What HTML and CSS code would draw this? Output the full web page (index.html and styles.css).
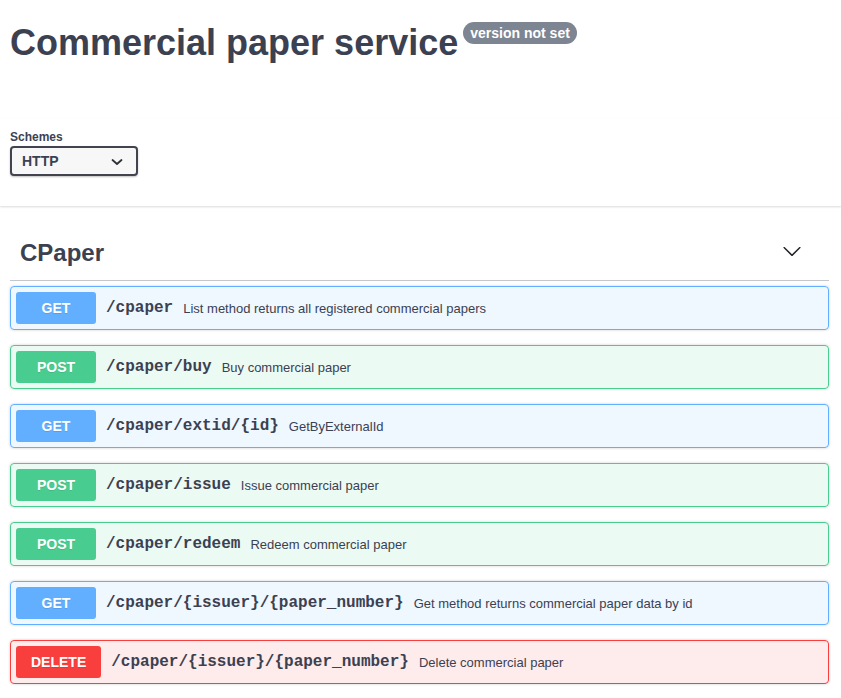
FILE: index.html
```html
<!DOCTYPE html>
<html lang="en">
<head>
<meta charset="utf-8">
<title>Commercial paper service</title>
<link rel="stylesheet" href="styles.css">
</head>
<body>
<div class="info">
  <div class="title-row">
    <h2 class="title">Commercial paper service</h2>
    <span class="version">version not set</span>
  </div>
</div>

<div class="scheme-container">
  <div class="schemes">
    <span class="schemes-label">Schemes</span>
    <div class="select">
      <span>HTTP</span>
      <svg class="select-arrow" width="12" height="8" viewBox="0 0 12 8"><path d="M1.5 2 L6 6 L10.5 2" fill="none" stroke="#2f3237" stroke-width="1.8" stroke-linecap="round" stroke-linejoin="round"/></svg>
    </div>
  </div>
</div>

<div class="tag-section">
  <div class="tag-header">
    <h3 class="tag-name">CPaper</h3>
    <svg class="tag-arrow" width="20" height="20" viewBox="0 0 20 20"><path d="M17.418 6.109c.272-.268.709-.268.979 0s.271.701 0 .969l-7.908 7.83c-.27.268-.707.268-.979 0l-7.908-7.83c-.27-.268-.27-.701 0-.969.271-.268.709-.268.979 0L10 13.25l7.418-7.141z" fill="#1f2125"/></svg>
  </div>

  <div class="ops">
    <div class="op op-get">
      <span class="method">GET</span>
      <span class="path">/cpaper</span>
      <span class="desc">List method returns all registered commercial papers</span>
    </div>
    <div class="op op-post">
      <span class="method">POST</span>
      <span class="path">/cpaper/buy</span>
      <span class="desc">Buy commercial paper</span>
    </div>
    <div class="op op-get">
      <span class="method">GET</span>
      <span class="path">/cpaper/extid/{id}</span>
      <span class="desc">GetByExternalId</span>
    </div>
    <div class="op op-post">
      <span class="method">POST</span>
      <span class="path">/cpaper/issue</span>
      <span class="desc">Issue commercial paper</span>
    </div>
    <div class="op op-post">
      <span class="method">POST</span>
      <span class="path">/cpaper/redeem</span>
      <span class="desc">Redeem commercial paper</span>
    </div>
    <div class="op op-get">
      <span class="method">GET</span>
      <span class="path">/cpaper/{issuer}/{paper_number}</span>
      <span class="desc">Get method returns commercial paper data by id</span>
    </div>
    <div class="op op-delete">
      <span class="method">DELETE</span>
      <span class="path">/cpaper/{issuer}/{paper_number}</span>
      <span class="desc">Delete commercial paper</span>
    </div>
  </div>
</div>
</body>
</html>
```

FILE: styles.css
```css
* { box-sizing: border-box; }

html, body {
  margin: 0;
  padding: 0;
  background: #fff;
  font-family: "Liberation Sans", Arial, sans-serif;
  color: #3b4151;
}

.info {
  height: 118px;
  padding: 22px 10px 0 10px;
}

.title-row {
  display: flex;
  align-items: flex-start;
}

.title {
  margin: 0;
  font-size: 36px;
  line-height: 42px;
  font-weight: bold;
  color: #3b4151;
}

.version {
  margin-left: 5px;
  height: 22px;
  line-height: 22px;
  padding: 0 7px;
  font-size: 14px;
  font-weight: bold;
  color: #fff;
  background: #7d8492;
  border-radius: 57px;
}

.scheme-container {
  background: #fff;
  box-shadow: 0 1px 2px 0 rgba(0, 0, 0, 0.15);
  padding: 12px 10px 30px 10px;
  margin-bottom: 20px;
}

.schemes {
  display: flex;
  flex-direction: column;
  align-items: flex-start;
}

.schemes-label {
  font-size: 12px;
  line-height: 14px;
  font-weight: bold;
  color: #3b4151;
}

.select {
  margin-top: 2px;
  width: 128px;
  height: 30px;
  border: 2px solid #41444e;
  border-radius: 4px;
  background: #f7f7f7;
  box-shadow: 0 1px 2px 0 rgba(0, 0, 0, 0.25);
  display: flex;
  align-items: center;
  justify-content: space-between;
  padding: 0 13px 0 10px;
  font-size: 14px;
  font-weight: bold;
  color: #3b4151;
}

.select-arrow {
  display: block;
  margin-top: 1px;
}

.tag-section {
  padding: 0 12px 0 10px;
}

.tag-header {
  display: flex;
  justify-content: space-between;
  align-items: flex-start;
  padding: 13px 27px 13px 10px;
  border-bottom: 1px solid rgba(59, 65, 81, 0.3);
}

.tag-name {
  margin: 0;
  font-size: 24px;
  line-height: 28px;
  font-weight: bold;
  color: #3b4151;
}

.tag-arrow {
  display: block;
  margin-top: 2px;
}

.ops {
  margin-top: 5px;
}

.op {
  display: flex;
  align-items: center;
  padding: 5px;
  margin-bottom: 15px;
  border: 1px solid;
  border-radius: 4px;
  box-shadow: 0 0 3px rgba(0, 0, 0, 0.19);
}

.method {
  min-width: 80px;
  padding: 6px 15px;
  font-size: 14px;
  line-height: 20px;
  font-weight: bold;
  text-align: center;
  color: #fff;
  border-radius: 3px;
  text-shadow: 0 1px 0 rgba(0, 0, 0, 0.1);
}

.path {
  padding: 0 10px;
  font-family: "Liberation Mono", "Courier New", monospace;
  font-size: 16px;
  font-weight: bold;
  color: #3b4151;
}

.desc {
  font-size: 13px;
  color: #3b4151;
}

.op-get { background: rgba(97, 175, 254, 0.1); border-color: #61affe; }
.op-get .method { background: #61affe; }

.op-post { background: rgba(73, 204, 144, 0.1); border-color: #49cc90; }
.op-post .method { background: #49cc90; }

.op-delete { background: rgba(249, 62, 62, 0.1); border-color: #f93e3e; }
.op-delete .method { background: #f93e3e; }
```
